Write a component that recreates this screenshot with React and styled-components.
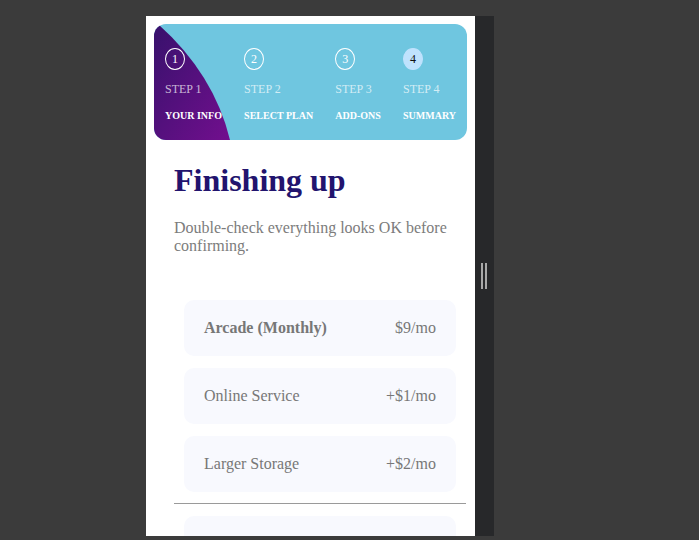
import React from "react";
import styled, { createGlobalStyle } from "styled-components";

const GlobalStyle = createGlobalStyle`
  html, body { margin: 0; padding: 0; }
  body {
    background: #3b3b3b;
    font-family: "Liberation Serif", "Times New Roman", serif;
  }
`;

const Stage = styled.div`
  display: flex;
  align-items: flex-start;
  padding: 16px 0 0 146px;
`;

const Viewport = styled.div`
  width: 329px;
  height: 520px;
  background: #ffffff;
  overflow: hidden;
  box-sizing: border-box;
  padding: 8px;
`;

const ResizeBar = styled.div`
  width: 19px;
  height: 520px;
  background: #27282a;
  display: flex;
  align-items: center;
  justify-content: center;
  gap: 2px;
  padding-right: 1px;
  box-sizing: border-box;
`;

const Grip = styled.span`
  display: block;
  width: 2px;
  height: 26px;
  background: #a9a9a9;
`;

const Header = styled.header`
  position: relative;
  height: 116px;
  border-radius: 12px;
  background: #6fc6e0;
  overflow: hidden;
`;

const Swoosh = styled.svg`
  position: absolute;
  left: 0;
  top: 0;
  width: 313px;
  height: 116px;
`;

const Steps = styled.ol`
  position: relative;
  list-style: none;
  margin: 0;
  padding: 24px 11px 0;
  display: flex;
  justify-content: space-between;
`;

const Step = styled.li`
  display: flex;
  flex-direction: column;
  align-items: flex-start;
`;

const Circle = styled.span`
  box-sizing: border-box;
  width: 20px;
  height: 22px;
  border-radius: 50%;
  border: 1px solid ${(p) => (p.$active ? "#bfe2fd" : "#ffffff")};
  background: ${(p) => (p.$active ? "#bfe2fd" : "transparent")};
  color: ${(p) => (p.$active ? "#111111" : "#ffffff")};
  display: flex;
  align-items: center;
  justify-content: center;
  font-size: 12px;
  margin-bottom: 12px;
`;

const StepNo = styled.span`
  font-size: 12px;
  line-height: 14px;
  color: rgba(255, 255, 255, 0.7);
  margin-bottom: 14px;
  white-space: nowrap;
`;

const StepName = styled.span`
  font-size: 10px;
  line-height: 12px;
  font-weight: 700;
  color: #ffffff;
  white-space: nowrap;
`;

const Main = styled.main`
  padding: 0 1px 0 20px;
`;

const Title = styled.h1`
  margin: 22px 0 20px;
  font-size: 32px;
  line-height: 37px;
  font-weight: 700;
  color: #22146e;
`;

const Lead = styled.p`
  margin: 0 0 45px;
  font-size: 16px;
  line-height: 18px;
  color: #7c7c7c;
`;

const List = styled.div`
  display: flex;
  flex-direction: column;
  gap: 12px;
  padding: 0 10px;
`;

const Row = styled.div`
  height: ${(p) => (p.$total ? "72px" : "56px")};
  box-sizing: border-box;
  padding: 0 20px;
  border-radius: 10px;
  background: #f8f9fe;
  display: flex;
  align-items: center;
  justify-content: space-between;
  font-size: 16px;
  color: #777777;
`;

const Name = styled.span`
  font-weight: ${(p) => (p.$strong ? 700 : 400)};
`;

const Price = styled.span``;

const Divider = styled.hr`
  border: 0;
  border-top: 1px solid #9a9a9a;
  margin: 11px 0 12px;
`;

const steps = [
  { n: 1, name: "YOUR INFO" },
  { n: 2, name: "SELECT PLAN" },
  { n: 3, name: "ADD-ONS" },
  { n: 4, name: "SUMMARY", active: true },
];

const items = [
  { name: "Arcade (Monthly)", price: "$9/mo", strong: true },
  { name: "Online Service", price: "+$1/mo" },
  { name: "Larger Storage", price: "+$2/mo" },
];

export default function App() {
  return (
    <>
      <GlobalStyle />
      <Stage>
        <Viewport>
          <Header>
            <Swoosh viewBox="0 0 313 116" aria-hidden="true">
              <defs>
                <linearGradient id="purple" x1="0" y1="0" x2="1" y2="1">
                  <stop offset="0" stopColor="#37116c" />
                  <stop offset="1" stopColor="#720f8e" />
                </linearGradient>
              </defs>
              <path d="M0 0 L4 0 Q60 50 76 116 L0 116 Z" fill="url(#purple)" />
            </Swoosh>
            <Steps>
              {steps.map((s) => (
                <Step key={s.n}>
                  <Circle $active={s.active}>{s.n}</Circle>
                  <StepNo>STEP {s.n}</StepNo>
                  <StepName>{s.name}</StepName>
                </Step>
              ))}
            </Steps>
          </Header>
          <Main>
            <Title>Finishing up</Title>
            <Lead>Double-check everything looks OK before confirming.</Lead>
            <List>
              {items.map((it) => (
                <Row key={it.name}>
                  <Name $strong={it.strong}>{it.name}</Name>
                  <Price>{it.price}</Price>
                </Row>
              ))}
            </List>
            <Divider />
            <List>
              <Row $total>
                <Name>Total (per month)</Name>
                <Price>+$12/mo</Price>
              </Row>
            </List>
          </Main>
        </Viewport>
        <ResizeBar>
          <Grip />
          <Grip />
        </ResizeBar>
      </Stage>
    </>
  );
}
